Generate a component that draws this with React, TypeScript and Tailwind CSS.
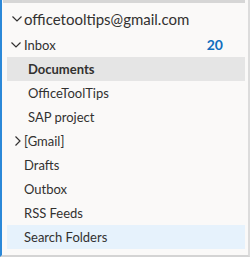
const font = { fontFamily: 'Lato, "Noto Sans", sans-serif' };

function ChevronDown() {
    return (
        <svg width="10" height="6" viewBox="0 0 10 6" className="shrink-0">
            <path d="M0.5 0.5 L5 5 L9.5 0.5" fill="none" stroke="#323130" strokeWidth="1.2" />
        </svg>
    );
}

function ChevronRight() {
    return (
        <svg width="6" height="10" viewBox="0 0 6 10" className="shrink-0">
            <path d="M0.5 0.5 L5 5 L0.5 9.5" fill="none" stroke="#323130" strokeWidth="1.2" />
        </svg>
    );
}

type RowProps = {
    label: string;
    indent?: boolean;
    bold?: boolean;
    bg?: string;
    icon?: React.ReactNode;
    count?: string;
};

function Row({ label, indent, bold, bg = '', icon, count }: RowProps) {
    return (
        <div className={`flex h-6 items-center ${bg}`}>
            <div className="flex w-[17px] shrink-0 items-center justify-end pr-[3px]">{icon}</div>
            <span
                className={`text-[13px] leading-none text-[#323130] ${indent ? 'pl-1' : ''} ${bold ? 'font-bold' : ''}`}
            >
                {label}
            </span>
            {count && (
                <span className="ml-auto mr-[22px] text-[14px] font-bold leading-none text-[#106ebe]">
                    {count}
                </span>
            )}
        </div>
    );
}

export default function App() {
    return (
        <div
            className="flex h-[257px] w-[250px] flex-col border-b-2 border-l-2 border-r-2 border-b-[#d4d4d4] border-l-[#2b88d8] border-r-[#dcdcdc] bg-[#faf9f8]"
            style={font}
        >
            <div className="ml-[1px] mr-[3px] h-[3px] bg-[#d6d6d6]" />
            <div className="flex flex-col pl-[5px] pr-[3px]">
                <div className="flex h-[30px] items-center pt-[2px]">
                    <div className="flex w-[17px] shrink-0 items-center justify-end pr-[2px]">
                        <ChevronDown />
                    </div>
                    <span className="text-[15px] leading-none text-[#323130]">officetooltips@gmail.com</span>
                </div>
                <Row label="Inbox" icon={<ChevronDown />} count="20" />
                <Row label="Documents" indent bold bg="bg-[#e5e5e5]" />
                <Row label="OfficeToolTips" indent />
                <Row label="SAP project" indent />
                <Row label="[Gmail]" icon={<ChevronRight />} />
                <Row label="Drafts" />
                <Row label="Outbox" />
                <Row label="RSS Feeds" />
                <Row label="Search Folders" bg="bg-[#e6f2fc]" />
            </div>
        </div>
    );
}
